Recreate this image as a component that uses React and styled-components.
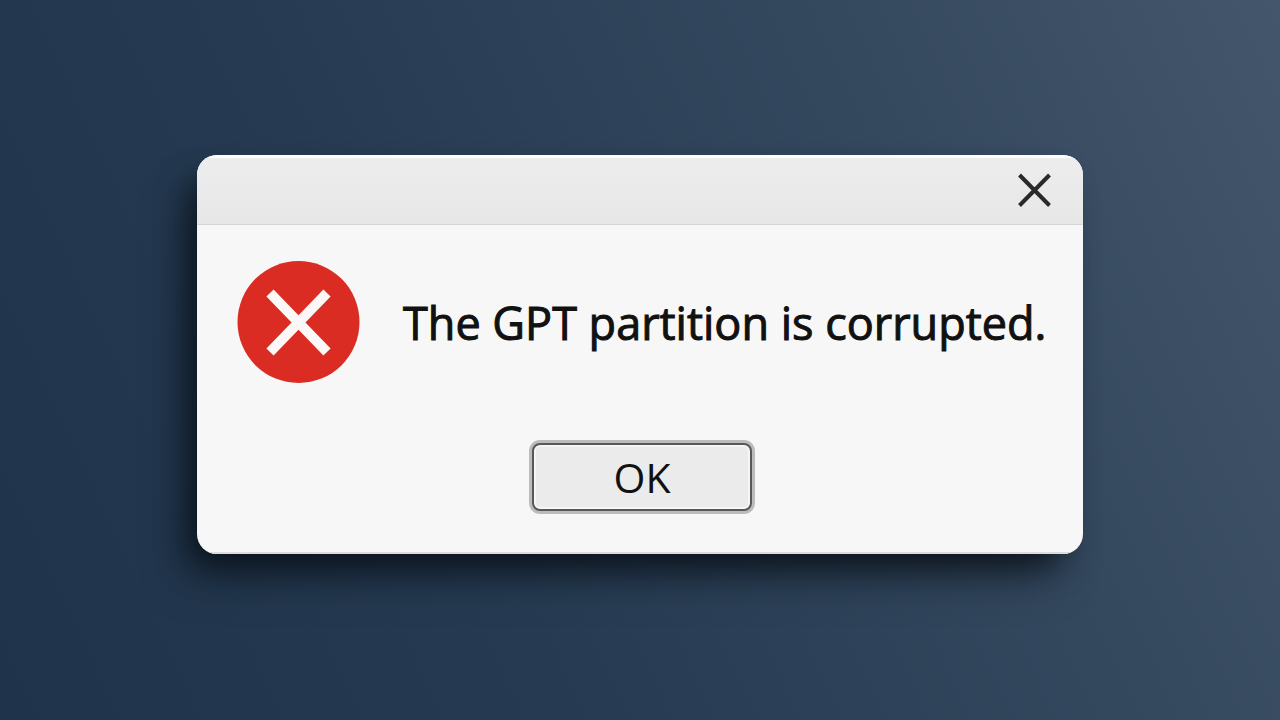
import React, { useState } from "react";
import styled, { createGlobalStyle } from "styled-components";

const GlobalStyle = createGlobalStyle`
  * {
    box-sizing: border-box;
  }
  body {
    margin: 0;
    font-family: "Open Sans", "Noto Sans", sans-serif;
    color: #111111;
  }
`;

export const Screen = styled.main`
  display: flex;
  align-items: center;
  justify-content: center;
  min-height: 100vh;
  padding: 24px 24px 35px;
  background: linear-gradient(65deg, #1f334a 0%, #263b52 35%, #34485e 72%, #44566c 100%);
`;

export const Dialog = styled.section`
  display: flex;
  flex-direction: column;
  width: 100%;
  max-width: 886px;
  overflow: hidden;
  border-radius: 20px;
  background: #f7f7f7;
`;

export const Shadow = styled.div`
  display: flex;
  width: 100%;
  max-width: 886px;
  border-radius: 20px;
  box-shadow: -14px 18px 32px -8px rgba(8, 14, 20, 0.8),
    -20px 32px 48px -16px rgba(8, 14, 20, 0.5);
`;

export const TitleBar = styled.header`
  display: flex;
  align-items: center;
  justify-content: flex-end;
  height: 70px;
  padding: 0 28px;
  border-top: 3px solid #fdfdfd;
  border-bottom: 1px solid #d6d6d6;
  background: linear-gradient(#ededed, #e7e7e7);
`;

export const CloseButton = styled.button`
  display: flex;
  padding: 0;
  border: none;
  background: none;
  color: #2a2a2a;
  cursor: pointer;
  :hover {
    color: #000000;
  }
`;

export const Body = styled.div`
  display: flex;
  flex-direction: column;
  gap: 56px;
  padding: 36px 36px 38px 40px;
  border-bottom: 2px solid #dcdcdc;
`;

export const Message = styled.div`
  display: flex;
  align-items: center;
  gap: 43px;
`;

export const ErrorIcon = styled.svg`
  flex: none;
  width: 123px;
  height: 123px;
`;

export const MessageText = styled.p`
  margin: 0;
  font-size: 45px;
  line-height: 60px;
  -webkit-text-stroke: 1px currentColor;
`;

export const Actions = styled.div`
  display: flex;
  justify-content: center;
`;

export const OkButton = styled.button`
  width: 220px;
  height: 68px;
  margin: 3px;
  padding: 0;
  border: 2px solid #585858;
  border-radius: 8px;
  background: #ebebeb;
  box-shadow: 0 0 0 3px #bcbcbc, inset 0 0 0 2px #f6f6f6;
  color: #111111;
  font-family: inherit;
  font-size: 41px;
  line-height: 60px;
  cursor: pointer;
  :hover {
    background: #e2e2e2;
  }
`;

function App() {
  const [open, setOpen] = useState(true);

  return (
    <Screen>
      <GlobalStyle />
      {open && (
        <Shadow>
          <Dialog role="alertdialog" aria-describedby="message">
            <TitleBar>
              <CloseButton aria-label="Close" onClick={() => setOpen(false)}>
                <svg width="40" height="40" viewBox="0 0 40 40">
                  <path
                    d="M4.5 4L34.5 34.5M34.5 4L4.5 34.5"
                    stroke="currentColor"
                    strokeWidth="4"
                  />
                </svg>
              </CloseButton>
            </TitleBar>
            <Body>
              <Message>
                <ErrorIcon viewBox="0 0 123 123" aria-hidden="true">
                  <circle cx="61.5" cy="61" r="61" fill="#da2c22" />
                  <path
                    d="M33 32L90 91M90 32L33 91"
                    stroke="#fbf8f7"
                    strokeWidth="10"
                  />
                </ErrorIcon>
                <MessageText id="message">
                  The GPT partition is corrupted.
                </MessageText>
              </Message>
              <Actions>
                <OkButton onClick={() => setOpen(false)}>OK</OkButton>
              </Actions>
            </Body>
          </Dialog>
        </Shadow>
      )}
    </Screen>
  );
}

export default App;
